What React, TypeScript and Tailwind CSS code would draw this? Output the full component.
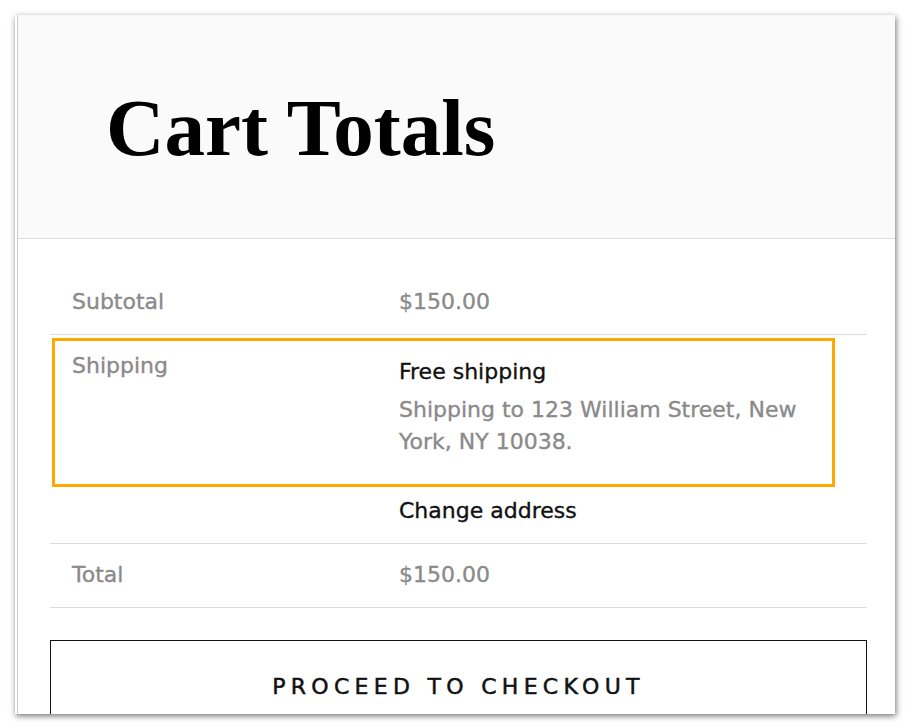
const SANS = 'font-["DejaVu_Sans","Liberation_Sans",sans-serif]';

function Row({ label, children, className = '' }: { label: string; children: React.ReactNode; className?: string }) {
  return (
    <div className={`grid grid-cols-[327px_1fr] border-b border-[#dddddd] text-[22px] leading-[32px] ${className}`}>
      <div className="pl-[22px] text-[#8a8a8a]">{label}</div>
      <div className="pl-[22px]">{children}</div>
    </div>
  );
}

export default function App() {
  return (
    <div className={`w-[910px] h-[728px] bg-white pt-[15px] pl-[15px] [-webkit-text-stroke:0.35px] ${SANS}`}>
      <div className="w-[880px] h-[699px] overflow-hidden bg-white pl-[2px] shadow-[1px_2px_6px_rgba(0,0,0,0.55)]">
        <div className="h-full border-l border-[#cfcfcf]">
          {/* Header */}
          <div className="h-[224px] bg-[#fafafa] border-b border-[#dedede] pt-[73px] pl-[88px]">
            <h1 className='font-["Liberation_Serif",serif] font-bold text-[81px] leading-none text-black [-webkit-text-stroke:0px]'>
              Cart Totals
            </h1>
          </div>

          {/* Totals table */}
          <div className="ml-[32px] mr-[28px] mt-[31px]">
            <Row label="Subtotal" className="py-[16px]">
              <span className="text-[#8a8a8a]">$150.00</span>
            </Row>

            <div className="relative">
              <div className="grid grid-cols-[327px_1fr] border-b border-[#dddddd] text-[22px] leading-[32px] pb-[16px]">
                <div className="pl-[22px] pt-[15px] text-[#8a8a8a]">Shipping</div>
                <div className="pl-[22px] pt-[21px]">
                  <p className="text-[#111111]">Free shipping</p>
                  <p className="mt-[6px] text-[#8a8a8a] pr-[40px]">
                    Shipping to 123 William Street, New York, NY 10038.
                  </p>
                  <p className="mt-[37px] text-[#111111]">Change address</p>
                </div>
              </div>
              {/* highlight annotation */}
              <div className="absolute top-[3px] left-[2px] w-[783px] h-[149px] border-[3px] border-[#ffa800] pointer-events-none" />
            </div>

            <Row label="Total" className="pt-[15px] pb-[16px]">
              <span className="text-[#8a8a8a]">$150.00</span>
            </Row>

            <button className="mt-[32px] w-full h-[120px] border border-[#111111] bg-white pt-[30px] flex justify-center items-start">
              <span className="text-[22px] leading-[32px] tracking-[5.3px] text-[#111111] [-webkit-text-stroke:0.5px]">
                PROCEED TO CHECKOUT
              </span>
            </button>
          </div>
        </div>
      </div>
    </div>
  );
}
